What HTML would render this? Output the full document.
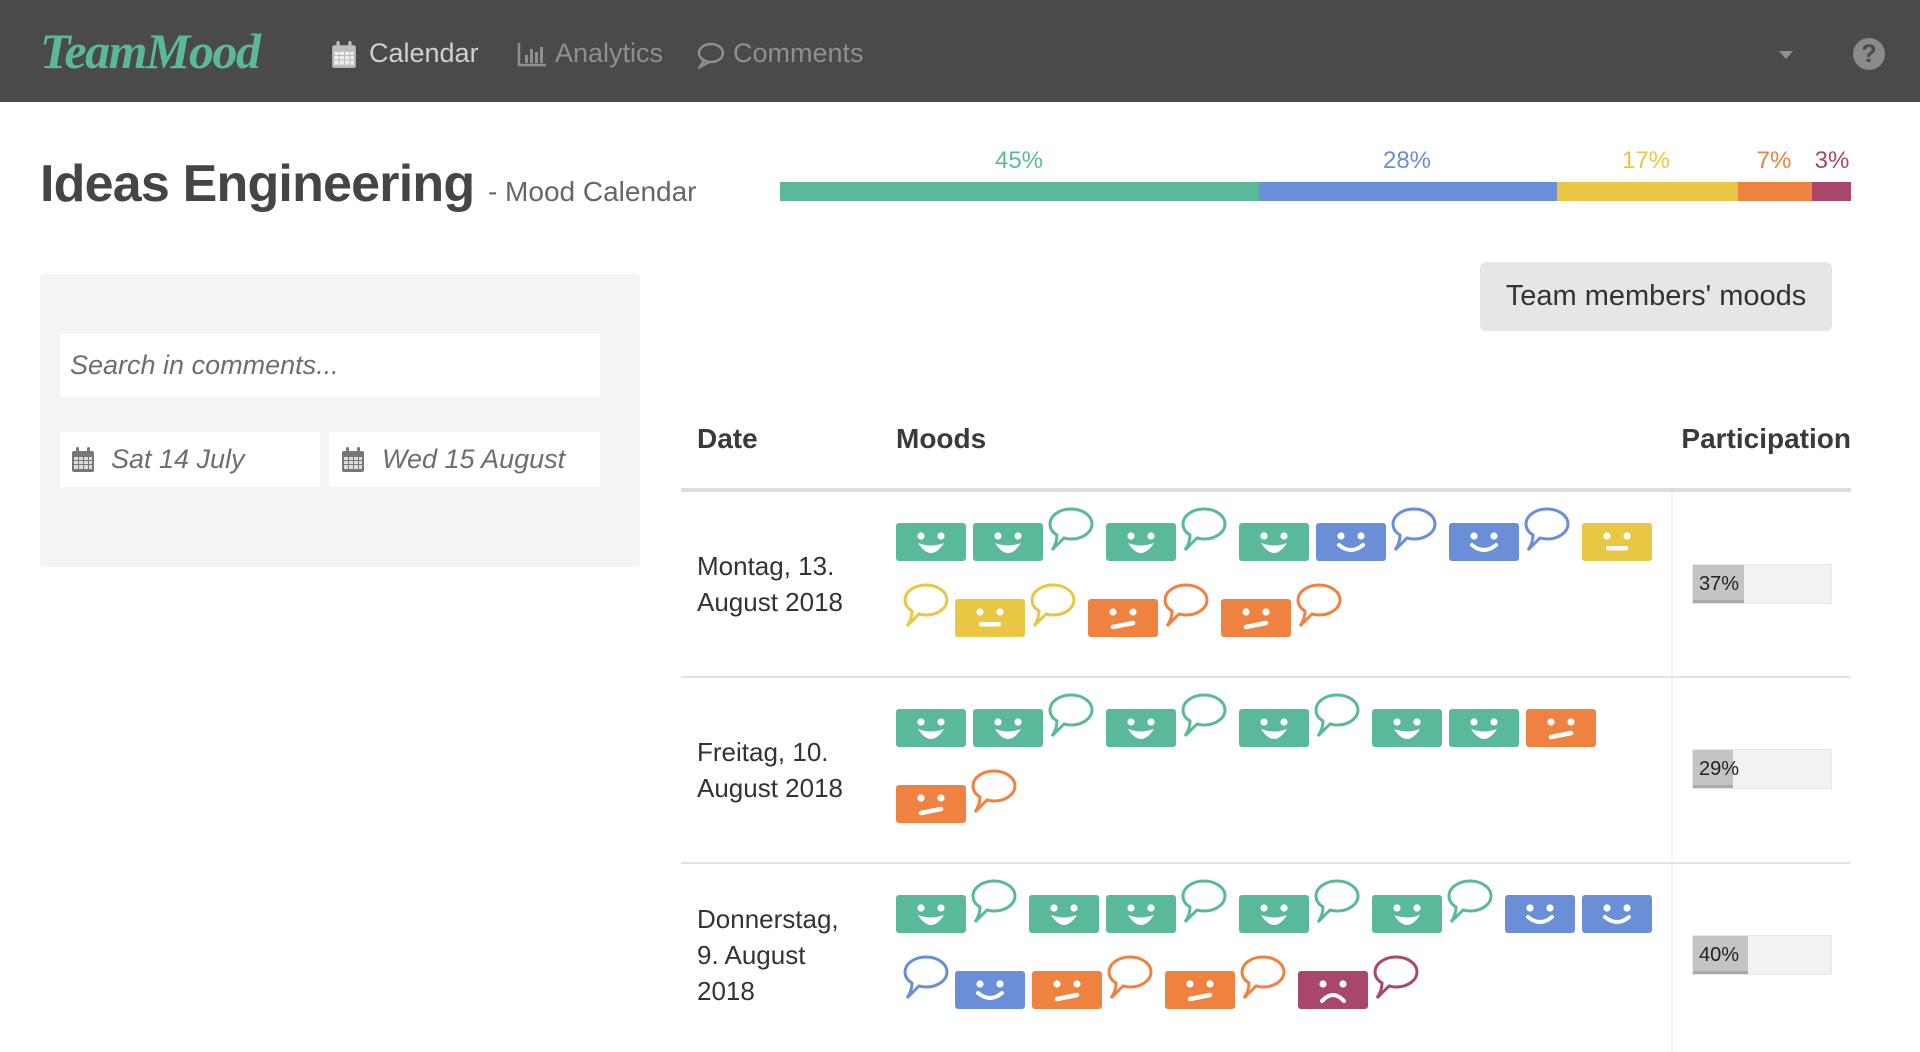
<!DOCTYPE html>
<html><head><meta charset="utf-8">
<style>
*{box-sizing:border-box;margin:0;padding:0}
body{width:1920px;height:1035px;overflow:hidden;background:#fff;font-family:"Liberation Sans",sans-serif;color:#333;position:relative}
.nav{position:absolute;left:0;top:0;width:1920px;height:102px;background:#4a4a4a}
.logo{position:absolute;left:40px;top:22px;font-family:"Liberation Serif",serif;font-style:italic;font-weight:bold;font-size:50px;color:#5bb99b;letter-spacing:-1.5px}
.ni{position:absolute;top:37px;font-size:27px;color:#8f8f8f;line-height:32px}
.ni svg{position:absolute;left:-38px;top:4px}
.abs{position:absolute}
h1{position:absolute;left:40px;top:154px;font-size:52px;font-weight:bold;color:#454545;letter-spacing:-0.8px;white-space:nowrap}
h1 span{font-size:28px;font-weight:normal;color:#666;letter-spacing:0}
.pbar{position:absolute;top:182px;height:19px}
.pl{position:absolute;top:147px;font-size:24px;transform:translateX(-50%)}
.panel{position:absolute;left:40px;top:274px;width:600px;height:293px;background:#f4f4f4;border-radius:4px}
.inp{position:absolute;background:#fff;font-style:italic;color:#6e6e6e;font-size:27px}
.btn{position:absolute;left:1480px;top:262px;width:352px;height:69px;background:#e6e6e6;border-radius:6px;font-size:29px;color:#333;text-align:center;line-height:69px}
.th{position:absolute;top:423px;font-size:28px;font-weight:bold;color:#3a3a3a}
.hl{position:absolute;left:681px;width:1170px;top:488px;height:4px;background:#ddd}
.rl{position:absolute;left:681px;width:1170px;height:2px;background:#e2e2e2}
.vl{position:absolute;left:1671px;width:2px;top:492px;height:560px;background:#f2f2f2}
.date{position:absolute;left:697px;font-size:26px;line-height:36px;color:#333}
.part{position:absolute;left:1692px;width:140px;height:40px;background:#f2f2f2;border:1px solid #e8e8e8}
.part div{height:100%;background:#c4c4c4;border-bottom:3px solid #aaa;font-size:20px;line-height:38px;padding-left:6px;color:#222;white-space:nowrap}
.line{position:absolute;left:896px;height:60px;white-space:nowrap}
.line svg{display:inline-block;vertical-align:top}
.f{margin-top:18px;margin-right:7px}
.b{margin-left:-9px;margin-right:12px}
.line .b:first-child{margin-left:-3px;margin-right:6px}
</style></head><body>
<svg width="0" height="0" style="position:absolute">
<defs>
<g id="eyes" fill="#fff"><circle cx="25" cy="13" r="3.6"/><circle cx="45" cy="13" r="3.6"/></g>
<symbol id="fg" viewBox="0 0 70 38"><rect width="70" height="38" rx="3" fill="#5bb99b"/><use href="#eyes"/><path d="M22 20 Q35 40 48 20 Q35 25 22 20Z" fill="#fff"/></symbol>
<symbol id="fb" viewBox="0 0 70 38"><rect width="70" height="38" rx="3" fill="#6a8fd6"/><use href="#eyes"/><path d="M23 22 Q35 32 47 22" stroke="#fff" stroke-width="4" fill="none" stroke-linecap="round"/></symbol>
<symbol id="fy" viewBox="0 0 70 38"><rect width="70" height="38" rx="3" fill="#eac645"/><use href="#eyes"/><rect x="24" y="23" width="22" height="4.5" rx="2" fill="#fff"/></symbol>
<symbol id="fo" viewBox="0 0 70 38"><rect width="70" height="38" rx="3" fill="#ef8240"/><use href="#eyes"/><path d="M25 28 L45 24" stroke="#fff" stroke-width="4.5" stroke-linecap="round"/></symbol>
<symbol id="fm" viewBox="0 0 70 38"><rect width="70" height="38" rx="3" fill="#a8476b"/><use href="#eyes"/><path d="M24 30 Q35 18 46 30" stroke="#fff" stroke-width="4" fill="none" stroke-linecap="round"/></symbol>
<path id="bub" d="M30 4 C42 4 51 11 51 19 C51 27 42 34 30 34 C27 34 25 33.5 23 33 Q18 38 11 45 Q16 38 16 30 C11 27 9 23 9 19 C9 11 18 4 30 4Z" stroke-width="3" fill="none"/>
<symbol id="bg" viewBox="0 0 53 50"><use href="#bub" stroke="#5bb99b"/></symbol>
<symbol id="bb" viewBox="0 0 53 50"><use href="#bub" stroke="#6a8fd6"/></symbol>
<symbol id="by" viewBox="0 0 53 50"><use href="#bub" stroke="#eac645"/></symbol>
<symbol id="bo" viewBox="0 0 53 50"><use href="#bub" stroke="#ef8240"/></symbol>
<symbol id="bm" viewBox="0 0 53 50"><use href="#bub" stroke="#a8476b"/></symbol>
<symbol id="cal" viewBox="0 0 24 26"><rect x="1" y="4" width="22" height="21" rx="2" fill="currentColor"/><rect x="5" y="0" width="3" height="7" rx="1.5" fill="currentColor"/><rect x="16" y="0" width="3" height="7" rx="1.5" fill="currentColor"/><g fill="#fff" opacity=".75"><rect x="3" y="10" width="4" height="3"/><rect x="8" y="10" width="4" height="3"/><rect x="13" y="10" width="4" height="3"/><rect x="18" y="10" width="3" height="3"/><rect x="3" y="14" width="4" height="3"/><rect x="8" y="14" width="4" height="3"/><rect x="13" y="14" width="4" height="3"/><rect x="18" y="14" width="3" height="3"/><rect x="3" y="18" width="4" height="4"/><rect x="8" y="18" width="4" height="4"/><rect x="13" y="18" width="4" height="4"/><rect x="18" y="18" width="3" height="4"/></g></symbol>
</defs></svg>

<div class="nav">
  <div class="logo">TeamMood</div>
  <div class="ni" style="left:369px;color:#d0d0d0"><svg width="26" height="28" style="color:#bdbdbd"><use href="#cal"/></svg>Calendar</div>
  <div class="ni" style="left:555px"><svg width="30" height="26" viewBox="0 0 30 26"><path d="M2 2 V24 H29" stroke="#8f8f8f" stroke-width="2.5" fill="none"/><g fill="#8f8f8f"><rect x="8" y="14" width="3" height="8"/><rect x="13" y="8" width="3" height="14"/><rect x="18" y="11" width="3" height="11"/><rect x="23" y="6" width="3" height="16"/></g></svg>Analytics</div>
  <div class="ni" style="left:733px"><svg width="30" height="28" viewBox="0 0 30 28"><ellipse cx="16" cy="12" rx="12" ry="9" stroke="#8f8f8f" stroke-width="2.5" fill="none"/><path d="M9 19 L5 26 L14 21" stroke="#8f8f8f" stroke-width="2.5" fill="none"/></svg>Comments</div>
  <div class="abs" style="left:1779px;top:51px;width:0;height:0;border-left:7px solid transparent;border-right:7px solid transparent;border-top:8px solid #8f8f8f"></div>
  <div class="abs" style="left:1853px;top:38px;width:32px;height:32px;border-radius:50%;background:#8a8a8a;color:#4a4a4a;font-weight:bold;font-size:25px;text-align:center;line-height:33px">?</div>
</div>

<h1>Ideas Engineering <span>- Mood Calendar</span></h1>
<div class="pl" style="left:1019px;color:#5bb99b">45%</div>
<div class="pl" style="left:1407px;color:#6a8fd6">28%</div>
<div class="pl" style="left:1646px;color:#eac645">17%</div>
<div class="pl" style="left:1774px;color:#ef8240">7%</div>
<div class="pl" style="left:1832px;color:#a8476b">3%</div>
<div class="pbar" style="left:780px;width:479px;background:#5bb99b"></div>
<div class="pbar" style="left:1259px;width:298px;background:#6a8fd6"></div>
<div class="pbar" style="left:1557px;width:181px;background:#e8c644"></div>
<div class="pbar" style="left:1738px;width:74px;background:#ef8240"></div>
<div class="pbar" style="left:1812px;width:39px;background:#a8476b"></div>

<div class="panel"></div>
<div class="inp" style="left:60px;top:334px;width:540px;height:63px;line-height:63px;padding-left:10px">Search in comments...</div>
<div class="inp" style="left:60px;top:432px;width:260px;height:55px;line-height:55px;padding-left:51px"><svg width="24" height="26" style="position:absolute;left:11px;top:15px;color:#777"><use href="#cal"/></svg>Sat 14 July</div>
<div class="inp" style="left:329px;top:432px;width:271px;height:55px;line-height:55px;padding-left:53px"><svg width="24" height="26" style="position:absolute;left:12px;top:15px;color:#777"><use href="#cal"/></svg>Wed 15 August</div>

<div class="btn">Team members' moods</div>

<div class="th" style="left:697px">Date</div>
<div class="th" style="left:896px">Moods</div>
<div class="th" style="right:69px">Participation</div>
<div class="hl"></div>
<div class="vl"></div>
<div class="rl" style="top:676px"></div>
<div class="rl" style="top:862px"></div>

<div class="date" style="top:548px">Montag, 13.<br>August 2018</div>
<div class="date" style="top:734px">Freitag, 10.<br>August 2018</div>
<div class="date" style="top:901px">Donnerstag,<br>9. August<br>2018</div>

<div class="part" style="top:564px"><div style="width:37%">37%</div></div>
<div class="part" style="top:749px"><div style="width:29%">29%</div></div>
<div class="part" style="top:935px"><div style="width:40%">40%</div></div>

<div class="line" style="top:505px">
<svg class="f" width="70" height="38"><use href="#fg"/></svg><svg class="f" width="70" height="38"><use href="#fg"/></svg><svg class="b" width="53" height="50"><use href="#bg"/></svg><svg class="f" width="70" height="38"><use href="#fg"/></svg><svg class="b" width="53" height="50"><use href="#bg"/></svg><svg class="f" width="70" height="38"><use href="#fg"/></svg><svg class="f" width="70" height="38"><use href="#fb"/></svg><svg class="b" width="53" height="50"><use href="#bb"/></svg><svg class="f" width="70" height="38"><use href="#fb"/></svg><svg class="b" width="53" height="50"><use href="#bb"/></svg><svg class="f" width="70" height="38"><use href="#fy"/></svg>
</div>
<div class="line" style="top:581px;left:899px">
<svg class="b" width="53" height="50"><use href="#by"/></svg><svg class="f" width="70" height="38"><use href="#fy"/></svg><svg class="b" width="53" height="50"><use href="#by"/></svg><svg class="f" width="70" height="38"><use href="#fo"/></svg><svg class="b" width="53" height="50"><use href="#bo"/></svg><svg class="f" width="70" height="38"><use href="#fo"/></svg><svg class="b" width="53" height="50"><use href="#bo"/></svg>
</div>
<div class="line" style="top:691px">
<svg class="f" width="70" height="38"><use href="#fg"/></svg><svg class="f" width="70" height="38"><use href="#fg"/></svg><svg class="b" width="53" height="50"><use href="#bg"/></svg><svg class="f" width="70" height="38"><use href="#fg"/></svg><svg class="b" width="53" height="50"><use href="#bg"/></svg><svg class="f" width="70" height="38"><use href="#fg"/></svg><svg class="b" width="53" height="50"><use href="#bg"/></svg><svg class="f" width="70" height="38"><use href="#fg"/></svg><svg class="f" width="70" height="38"><use href="#fg"/></svg><svg class="f" width="70" height="38"><use href="#fo"/></svg>
</div>
<div class="line" style="top:767px">
<svg class="f" width="70" height="38"><use href="#fo"/></svg><svg class="b" width="53" height="50"><use href="#bo"/></svg>
</div>
<div class="line" style="top:877px">
<svg class="f" width="70" height="38"><use href="#fg"/></svg><svg class="b" width="53" height="50"><use href="#bg"/></svg><svg class="f" width="70" height="38"><use href="#fg"/></svg><svg class="f" width="70" height="38"><use href="#fg"/></svg><svg class="b" width="53" height="50"><use href="#bg"/></svg><svg class="f" width="70" height="38"><use href="#fg"/></svg><svg class="b" width="53" height="50"><use href="#bg"/></svg><svg class="f" width="70" height="38"><use href="#fg"/></svg><svg class="b" width="53" height="50"><use href="#bg"/></svg><svg class="f" width="70" height="38"><use href="#fb"/></svg><svg class="f" width="70" height="38"><use href="#fb"/></svg>
</div>
<div class="line" style="top:953px;left:899px">
<svg class="b" width="53" height="50"><use href="#bb"/></svg><svg class="f" width="70" height="38"><use href="#fb"/></svg><svg class="f" width="70" height="38"><use href="#fo"/></svg><svg class="b" width="53" height="50"><use href="#bo"/></svg><svg class="f" width="70" height="38"><use href="#fo"/></svg><svg class="b" width="53" height="50"><use href="#bo"/></svg><svg class="f" width="70" height="38"><use href="#fm"/></svg><svg class="b" width="53" height="50"><use href="#bm"/></svg>
</div>
</body></html>
